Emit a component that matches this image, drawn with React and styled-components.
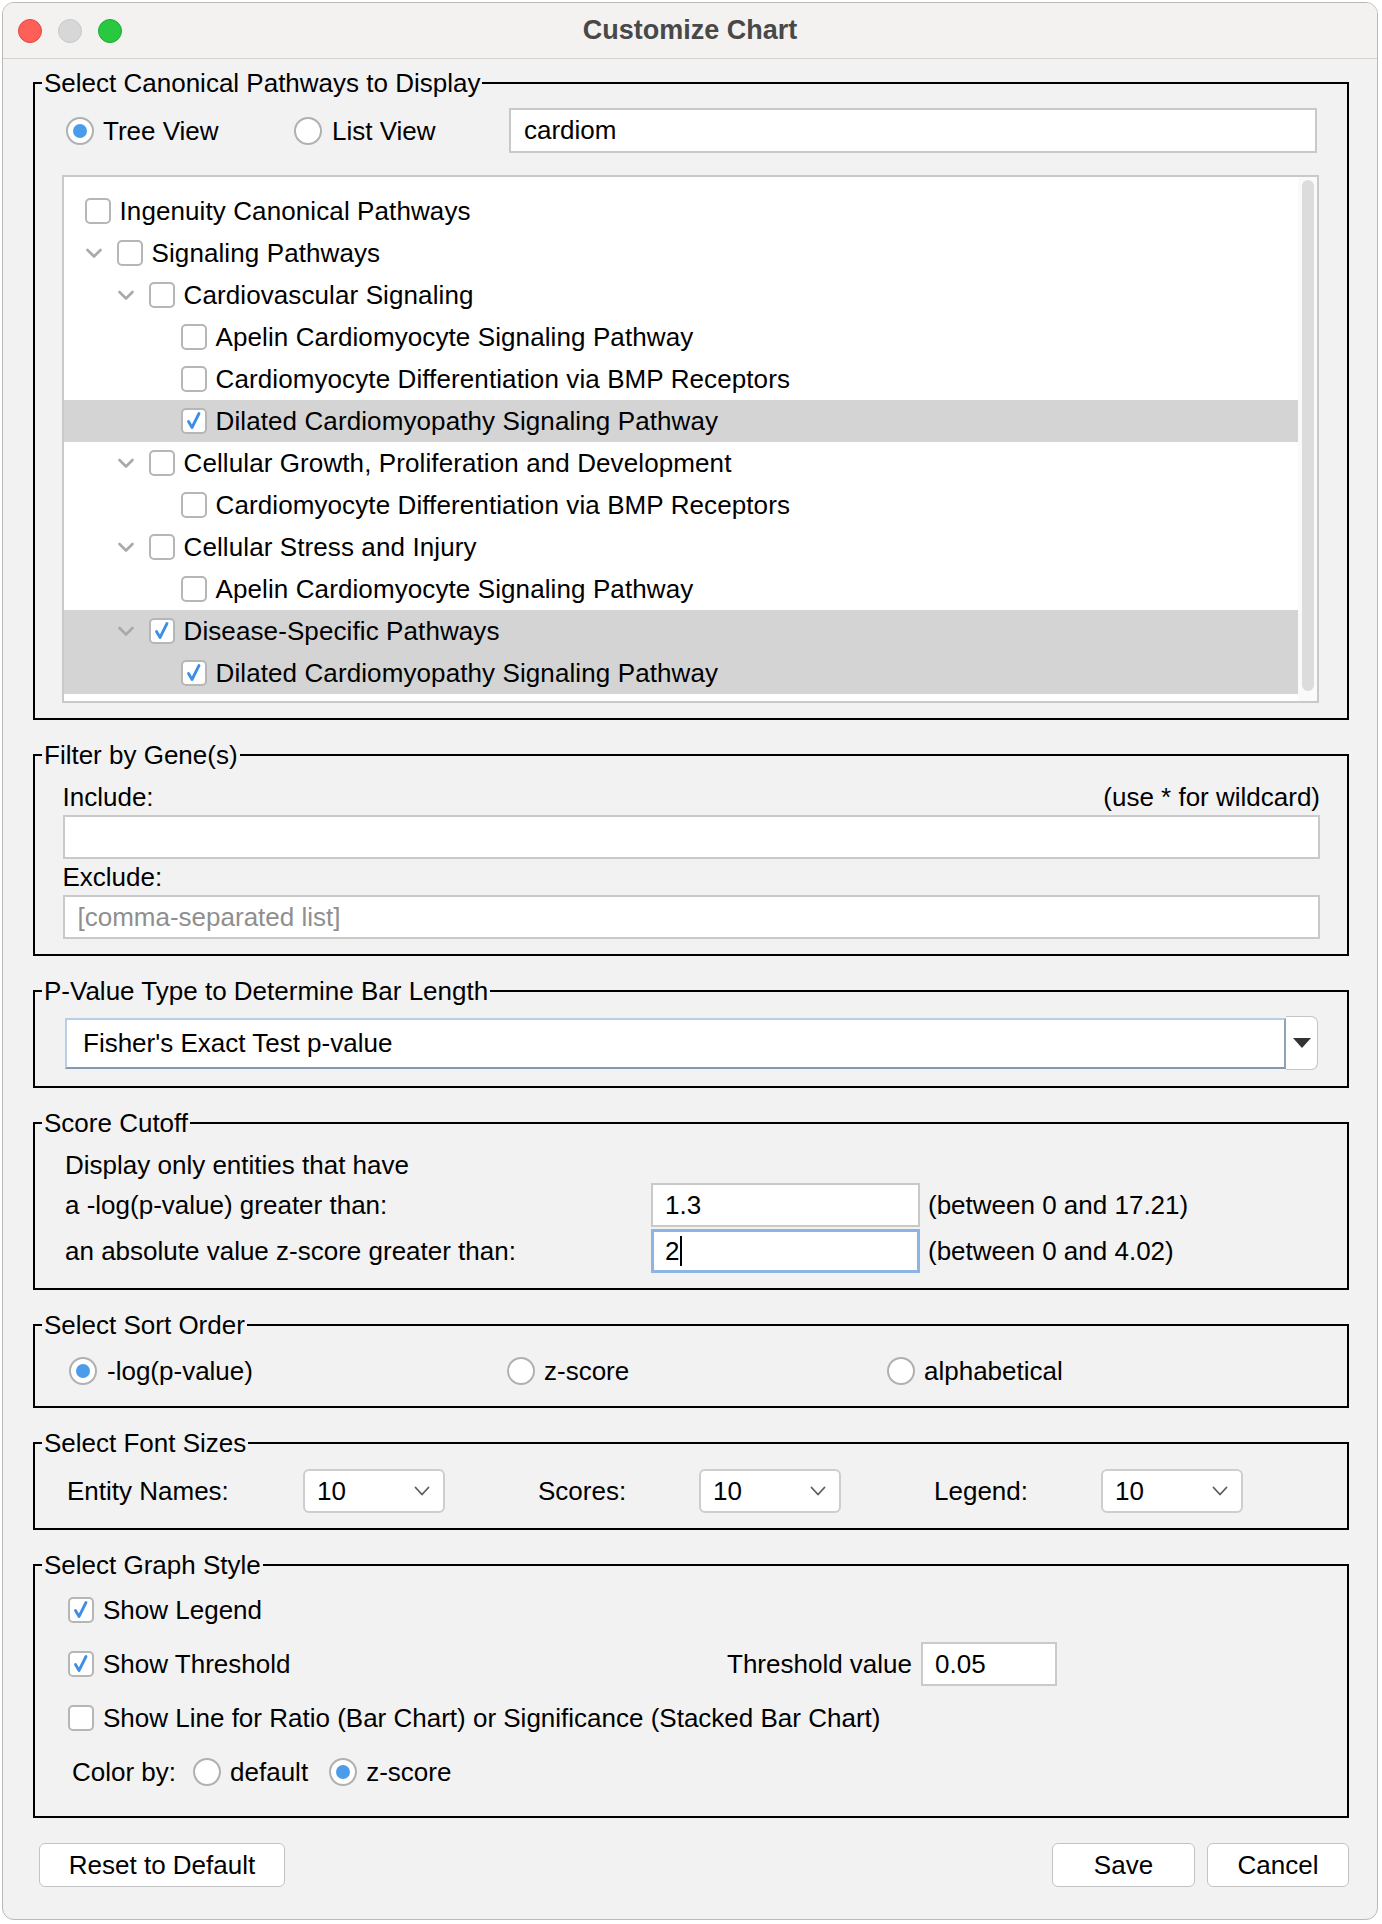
import React from "react";
import styled, { createGlobalStyle } from "styled-components";

const Global = createGlobalStyle`
  html, body { margin: 0; padding: 0; background: #ffffff; }
  body {
    font-family: "Liberation Sans", Arial, Helvetica, sans-serif;
    font-size: 26px;
    color: #000;
  }
  * { box-sizing: border-box; }
`;

const Window = styled.div`
  margin: 2px 0 0 2px;
  width: 1376px;
  height: 1918px;
  border: 1px solid #b9b9b9;
  border-radius: 12px;
  background: #f2f2f2;
  overflow: hidden;
  display: flex;
  flex-direction: column;
`;

const TitleBar = styled.div`
  height: 56px;
  flex-shrink: 0;
  background: #f3f2f1;
  border-bottom: 1px solid #d2d2d2;
  display: grid;
  grid-template-columns: 1fr auto 1fr;
  align-items: center;
  padding: 0 15px;
`;

const Lights = styled.div`
  display: flex;
  gap: 16px;
  align-items: center;
`;

const Light = styled.span`
  width: 24px;
  height: 24px;
  border-radius: 50%;
  background: ${(p) => p.color};
  border: 1px solid ${(p) => p.edge};
`;

const Title = styled.div`
  font-weight: bold;
  font-size: 27px;
  color: #484848;
`;

const Content = styled.div`
  padding: 9px 28px 0 30px;
  display: flex;
  flex-direction: column;
`;

const Group = styled.fieldset`
  margin: 0;
  padding: 0;
  border: 2px solid #000;
  min-width: 0;
  & + & {
    margin-top: 20px;
  }
`;

const Legend = styled.legend`
  margin-left: 7px;
  padding: 0 2px;
  font-size: 26px;
  line-height: 30px;
  color: #000;
`;

const GroupBody = styled.div`
  padding: ${(p) => p.pad};
  display: flex;
  flex-direction: column;
`;

/* ---------- radio & checkbox ---------- */
const RadioCircle = styled.span`
  width: 28px;
  height: 28px;
  flex-shrink: 0;
  border-radius: 50%;
  border: 2px solid #b0b0b0;
  background: #fff;
  display: flex;
  align-items: center;
  justify-content: center;
  &::after {
    content: "";
    display: ${(p) => (p.on ? "block" : "none")};
    width: 14px;
    height: 14px;
    border-radius: 50%;
    background: #4b9ce9;
  }
`;

const RadioOption = styled.div`
  display: flex;
  align-items: center;
  gap: ${(p) => p.gap ?? 10}px;
  width: ${(p) => (p.w ? `${p.w}px` : "auto")};
  flex-shrink: 0;
  margin-left: ${(p) => p.ml ?? 0}px;
  line-height: 30px;
`;

const Box = styled.span`
  width: 26px;
  height: 26px;
  flex-shrink: 0;
  border-radius: 5px;
  border: 2px solid #b6b6b6;
  background: #fff;
  display: flex;
  align-items: center;
  justify-content: center;
`;

const CheckMark = () => (
  <svg width="22" height="22" viewBox="0 0 22 22">
    <path
      d="M5.5 11.5 L9 17.5 L16 3.5"
      fill="none"
      stroke="#3d8fe6"
      strokeWidth="2.8"
      strokeLinecap="round"
      strokeLinejoin="round"
    />
  </svg>
);

const Checkbox = ({ on }) => <Box>{on && <CheckMark />}</Box>;
const Radio = ({ on }) => <RadioCircle on={on} />;

/* ---------- group 1 ---------- */
const ViewRow = styled.div`
  display: flex;
  align-items: center;
  height: 45px;
  padding-left: 4px;
`;

const SearchField = styled.div`
  flex: 1;
  height: 45px;
  margin-right: 2px;
  border: 2px solid #c9c9c9;
  background: #fff;
  display: flex;
  align-items: center;
  padding-left: 13px;
`;

const Tree = styled.div`
  margin-top: 22px;
  height: 528px;
  border: 2px solid #c9c9c9;
  background: #fff;
  display: flex;
`;

const TreeRows = styled.div`
  flex: 1;
  padding-top: 13px;
  overflow: hidden;
`;

const TreeRow = styled.div`
  height: 42px;
  display: flex;
  align-items: center;
  gap: 9px;
  padding-left: ${(p) => p.indent}px;
  background: ${(p) => (p.selected ? "#d4d4d4" : "transparent")};
  white-space: nowrap;
  letter-spacing: 0.1px;
`;

const ToggleSlot = styled.span`
  width: 23px;
  flex-shrink: 0;
  display: flex;
  align-items: center;
`;

const Gutter = styled.div`
  width: 19px;
  flex-shrink: 0;
  background: #fafafa;
  padding: 3px 3px 10px 4px;
  display: flex;
`;

const Thumb = styled.div`
  flex: 1;
  border-radius: 6px;
  background: #dcdcdc;
`;

const Chevron = () => (
  <svg width="18" height="12" viewBox="0 0 18 12">
    <path
      d="M2.5 3 L9 9.5 L15.5 3"
      fill="none"
      stroke="#a9a9a9"
      strokeWidth="2.6"
      strokeLinecap="round"
      strokeLinejoin="round"
    />
  </svg>
);

const treeData = [
  { level: 0, text: "Ingenuity Canonical Pathways" },
  { level: 1, text: "Signaling Pathways", toggle: true },
  { level: 2, text: "Cardiovascular Signaling", toggle: true },
  { level: 3, text: "Apelin Cardiomyocyte Signaling Pathway" },
  { level: 3, text: "Cardiomyocyte Differentiation via BMP Receptors" },
  { level: 3, text: "Dilated Cardiomyopathy Signaling Pathway", checked: true, selected: true },
  { level: 2, text: "Cellular Growth, Proliferation and Development", toggle: true },
  { level: 3, text: "Cardiomyocyte Differentiation via BMP Receptors" },
  { level: 2, text: "Cellular Stress and Injury", toggle: true },
  { level: 3, text: "Apelin Cardiomyocyte Signaling Pathway" },
  { level: 2, text: "Disease-Specific Pathways", toggle: true, checked: true, selected: true },
  { level: 3, text: "Dilated Cardiomyopathy Signaling Pathway", checked: true, selected: true },
];

/* ---------- group 2 ---------- */
const LabelRow = styled.div`
  display: flex;
  justify-content: space-between;
  line-height: 30px;
  margin-top: ${(p) => p.mt ?? 0}px;
`;

const TextField = styled.div`
  height: 44px;
  margin-top: 3px;
  border: 2px solid #c9c9c9;
  background: #fff;
  display: flex;
  align-items: center;
  padding-left: 13px;
  color: ${(p) => (p.placeholder ? "#8f8f8f" : "#000")};
`;

/* ---------- group 3 ---------- */
const Combo = styled.div`
  display: flex;
  align-items: center;
`;

const ComboText = styled.div`
  flex: 1;
  height: 51px;
  background: #fff;
  border-style: solid;
  border-width: 2px;
  border-color: #b8cee6 #8ea2ba #8598b0 #b8cee6;
  display: flex;
  align-items: center;
  padding-left: 16px;
`;

const ComboArrow = styled.div`
  width: 32px;
  height: 54px;
  background: #fff;
  border: 1.5px solid #c4c4c4;
  border-left: none;
  border-radius: 0 7px 7px 0;
  display: flex;
  align-items: center;
  justify-content: center;
  &::after {
    content: "";
    border-left: 9px solid transparent;
    border-right: 9px solid transparent;
    border-top: 10px solid #333;
  }
`;

/* ---------- group 4 ---------- */
const Intro = styled.div`
  line-height: 30px;
`;

const CutoffGrid = styled.div`
  margin-top: 3px;
  display: grid;
  grid-template-columns: 586px 269px auto;
  grid-auto-rows: 44px;
  row-gap: 2px;
  align-items: center;
`;

const NumField = styled.div`
  height: 44px;
  background: #fff;
  border: ${(p) => (p.focused ? "3px solid #8cb5e6" : "2px solid #c9c9c9")};
  display: flex;
  align-items: center;
  padding-left: ${(p) => (p.focused ? 11 : 12)}px;
`;

const Caret = styled.span`
  display: inline-block;
  width: 2px;
  height: 30px;
  background: #000;
  margin-left: 1px;
`;

const RangeNote = styled.div`
  padding-left: 8px;
`;

/* ---------- group 5 ---------- */
const OptionRow = styled.div`
  display: flex;
  align-items: center;
  height: 44px;
`;

/* ---------- group 6 ---------- */
const FontLabel = styled.div`
  width: ${(p) => p.w}px;
  margin-left: ${(p) => p.ml ?? 0}px;
  flex-shrink: 0;
`;

const SizeSelect = styled.div`
  width: 142px;
  height: 44px;
  flex-shrink: 0;
  border: 2px solid #cecece;
  border-radius: 6px;
  background: #fff;
  display: flex;
  align-items: center;
  justify-content: space-between;
  padding: 0 13px 0 12px;
`;

const SmallChevron = () => (
  <svg width="16" height="10" viewBox="0 0 16 10">
    <path
      d="M1.5 1.5 L8 8.5 L14.5 1.5"
      fill="none"
      stroke="#5b5b5b"
      strokeWidth="1.8"
      strokeLinecap="round"
      strokeLinejoin="round"
    />
  </svg>
);

/* ---------- group 7 ---------- */
const StyleRows = styled.div`
  display: flex;
  flex-direction: column;
  gap: 10px;
`;

const StyleRow = styled.div`
  display: flex;
  align-items: center;
  height: 44px;
`;

const CheckItem = styled.div`
  display: flex;
  align-items: center;
  gap: 9px;
  width: ${(p) => (p.w ? `${p.w}px` : "auto")};
  flex-shrink: 0;
`;

const ThresholdField = styled.div`
  width: 136px;
  height: 44px;
  margin-left: 9px;
  border: 2px solid #cacaca;
  background: #fff;
  display: flex;
  align-items: center;
  padding-left: 12px;
`;

const ColorLabel = styled.div`
  margin-left: 4px;
  margin-right: 17px;
`;

/* ---------- buttons ---------- */
const ButtonBar = styled.div`
  margin-top: 25px;
  display: flex;
  align-items: center;
  gap: 12px;
`;

const Button = styled.div`
  width: ${(p) => p.w}px;
  height: 44px;
  margin-left: ${(p) => p.ml ?? 0}px;
  margin-right: ${(p) => (p.push ? "auto" : "0")};
  background: #fff;
  border: 1.5px solid #c3c3c3;
  border-radius: 6px;
  display: flex;
  align-items: center;
  justify-content: center;
`;

export default function App() {
  return (
    <>
      <Global />
      <Window>
        <TitleBar>
          <Lights>
            <Light color="#fe5f57" edge="#e2463f" />
            <Light color="#d7d7d7" edge="#c8c8c8" />
            <Light color="#28c840" edge="#1daa2e" />
          </Lights>
          <Title>Customize Chart</Title>
          <span />
        </TitleBar>

        <Content>
          <Group>
            <Legend>Select Canonical Pathways to Display</Legend>
            <GroupBody pad="10px 28px 15px 27px">
              <ViewRow>
                <RadioOption w={228} gap={9}>
                  <Radio on />
                  Tree View
                </RadioOption>
                <RadioOption w={215} gap={10}>
                  <Radio />
                  List View
                </RadioOption>
                <SearchField>cardiom</SearchField>
              </ViewRow>
              <Tree>
                <TreeRows>
                  {treeData.map((r, i) => (
                    <TreeRow
                      key={i}
                      selected={r.selected}
                      indent={r.level === 0 ? 20.5 : 20.5 + 32 * (r.level - 1)}
                    >
                      {r.level > 0 && <ToggleSlot>{r.toggle && <Chevron />}</ToggleSlot>}
                      <Checkbox on={r.checked} />
                      <span>{r.text}</span>
                    </TreeRow>
                  ))}
                </TreeRows>
                <Gutter>
                  <Thumb />
                </Gutter>
              </Tree>
            </GroupBody>
          </Group>

          <Group>
            <Legend>Filter by Gene(s)</Legend>
            <GroupBody pad="12px 27px 15px 27.5px">
              <LabelRow>
                <span>Include:</span>
                <span>(use * for wildcard)</span>
              </LabelRow>
              <TextField />
              <LabelRow mt={3}>
                <span>Exclude:</span>
              </LabelRow>
              <TextField placeholder>[comma-separated list]</TextField>
            </GroupBody>
          </Group>

          <Group>
            <Legend>P-Value Type to Determine Bar Length</Legend>
            <GroupBody pad="10px 29px 16px 30px">
              <Combo>
                <ComboText>Fisher's Exact Test p-value</ComboText>
                <ComboArrow />
              </Combo>
            </GroupBody>
          </Group>

          <Group>
            <Legend>Score Cutoff</Legend>
            <GroupBody pad="12px 20px 15px 30px">
              <Intro>Display only entities that have</Intro>
              <CutoffGrid>
                <span>a -log(p-value) greater than:</span>
                <NumField>1.3</NumField>
                <RangeNote>(between 0 and 17.21)</RangeNote>
                <span>an absolute value z-score greater than:</span>
                <NumField focused>
                  2<Caret />
                </NumField>
                <RangeNote>(between 0 and 4.02)</RangeNote>
              </CutoffGrid>
            </GroupBody>
          </Group>

          <Group>
            <Legend>Select Sort Order</Legend>
            <GroupBody pad="9px 20px 13px 34px">
              <OptionRow>
                <RadioOption w={438} gap={10}>
                  <Radio on />
                  -log(p-value)
                </RadioOption>
                <RadioOption w={380} gap={9}>
                  <Radio />
                  z-score
                </RadioOption>
                <RadioOption gap={9}>
                  <Radio />
                  alphabetical
                </RadioOption>
              </OptionRow>
            </GroupBody>
          </Group>

          <Group>
            <Legend>Select Font Sizes</Legend>
            <GroupBody pad="11px 20px 15px 32px">
              <OptionRow>
                <FontLabel w={236}>Entity Names:</FontLabel>
                <SizeSelect>
                  10
                  <SmallChevron />
                </SizeSelect>
                <FontLabel w={161} ml={93}>
                  Scores:
                </FontLabel>
                <SizeSelect>
                  10
                  <SmallChevron />
                </SizeSelect>
                <FontLabel w={167} ml={93}>
                  Legend:
                </FontLabel>
                <SizeSelect>
                  10
                  <SmallChevron />
                </SizeSelect>
              </OptionRow>
            </GroupBody>
          </Group>

          <Group>
            <Legend>Select Graph Style</Legend>
            <GroupBody pad="8px 20px 22px 33px">
              <StyleRows>
                <StyleRow>
                  <CheckItem>
                    <Checkbox on />
                    Show Legend
                  </CheckItem>
                </StyleRow>
                <StyleRow>
                  <CheckItem w={659}>
                    <Checkbox on />
                    Show Threshold
                  </CheckItem>
                  <span>Threshold value</span>
                  <ThresholdField>0.05</ThresholdField>
                </StyleRow>
                <StyleRow>
                  <CheckItem>
                    <Checkbox />
                    Show Line for Ratio (Bar Chart) or Significance (Stacked Bar Chart)
                  </CheckItem>
                </StyleRow>
                <StyleRow>
                  <ColorLabel>Color by:</ColorLabel>
                  <RadioOption gap={9}>
                    <Radio />
                    default
                  </RadioOption>
                  <RadioOption gap={9} ml={21}>
                    <Radio on />
                    z-score
                  </RadioOption>
                </StyleRow>
              </StyleRows>
            </GroupBody>
          </Group>

          <ButtonBar>
            <Button w={246} ml={6} push>
              Reset to Default
            </Button>
            <Button w={143}>Save</Button>
            <Button w={142}>Cancel</Button>
          </ButtonBar>
        </Content>
      </Window>
    </>
  );
}
